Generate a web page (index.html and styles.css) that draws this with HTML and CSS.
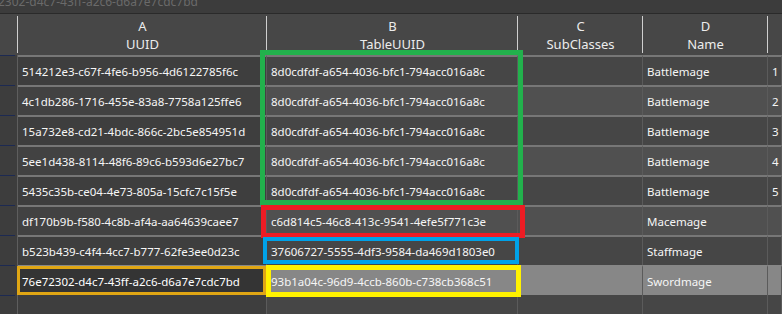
FILE: index.html
```html
<!DOCTYPE html>
<html>
<head>
<meta charset="utf-8">
<link rel="stylesheet" href="styles.css">
</head>
<body>
<div class="topbar"><span class="path">2302-d4c7-43ff-a2c6-d6a7e7cdc7bd</span></div>
<div class="grid">
  <div class="rh head"></div>
  <div class="hc">A<br>UUID</div>
  <div class="hc">B<br>TableUUID</div>
  <div class="hc">C<br>SubClasses</div>
  <div class="hc">D<br>Name</div>
  <div class="hc last"></div>

  <div class="rh"></div>
  <div class="c a">514212e3-c67f-4fe6-b956-4d6122785f6c</div>
  <div class="c">8d0cdfdf-a654-4036-bfc1-794acc016a8c</div>
  <div class="c"></div>
  <div class="c">Battlemage</div>
  <div class="c">1</div>

  <div class="rh"></div>
  <div class="c a ev">4c1db286-1716-455e-83a8-7758a125ffe6</div>
  <div class="c ev">8d0cdfdf-a654-4036-bfc1-794acc016a8c</div>
  <div class="c ev"></div>
  <div class="c ev">Battlemage</div>
  <div class="c ev">2</div>

  <div class="rh"></div>
  <div class="c a">15a732e8-cd21-4bdc-866c-2bc5e854951d</div>
  <div class="c">8d0cdfdf-a654-4036-bfc1-794acc016a8c</div>
  <div class="c"></div>
  <div class="c">Battlemage</div>
  <div class="c">3</div>

  <div class="rh"></div>
  <div class="c a ev">5ee1d438-8114-48f6-89c6-b593d6e27bc7</div>
  <div class="c ev">8d0cdfdf-a654-4036-bfc1-794acc016a8c</div>
  <div class="c ev"></div>
  <div class="c ev">Battlemage</div>
  <div class="c ev">4</div>

  <div class="rh"></div>
  <div class="c a">5435c35b-ce04-4e73-805a-15cfc7c15f5e</div>
  <div class="c">8d0cdfdf-a654-4036-bfc1-794acc016a8c</div>
  <div class="c"></div>
  <div class="c">Battlemage</div>
  <div class="c">5</div>

  <div class="rh"></div>
  <div class="c a ev">df170b9b-f580-4c8b-af4a-aa64639caee7</div>
  <div class="c ev">c6d814c5-46c8-413c-9541-4efe5f771c3e</div>
  <div class="c ev"></div>
  <div class="c ev">Macemage</div>
  <div class="c ev"></div>

  <div class="rh"></div>
  <div class="c a">b523b439-c4f4-4cc7-b777-62fe3ee0d23c</div>
  <div class="c">37606727-5555-4df3-9584-da469d1803e0</div>
  <div class="c"></div>
  <div class="c">Staffmage</div>
  <div class="c"></div>

  <div class="rh"></div>
  <div class="c a cur">76e72302-d4c7-43ff-a2c6-d6a7e7cdc7bd</div>
  <div class="c sel">93b1a04c-96d9-4ccb-860b-c738cb368c51</div>
  <div class="c sel"></div>
  <div class="c sel">Swordmage</div>
  <div class="c sel"></div>

  <div class="rh fill"></div>
  <div class="f a"></div>
  <div class="f"></div>
  <div class="f"></div>
  <div class="f"></div>
  <div class="f"></div>

  <div class="box green"></div>
  <div class="box red"></div>
  <div class="box blue"></div>
  <div class="box yellow"></div>
  <div class="box orange"></div>
</div>
</body>
</html>
```

FILE: styles.css
```css
html, body {
  margin: 0;
  padding: 0;
  background: #464646;
  width: 782px;
  height: 314px;
  overflow: hidden;
  font-family: "Noto Sans", "Open Sans", sans-serif;
}

.topbar {
  height: 13px;
  background: #3c3c3c;
  border-bottom: 1px solid #2a2a2a;
  overflow: hidden;
}

.path {
  display: block;
  font-size: 12px;
  line-height: 12px;
  margin-top: -4px;
  margin-left: -2px;
  color: #6a6a6a;
  white-space: nowrap;
}

.grid {
  position: relative;
  display: grid;
  grid-template-columns: 18px 249px 251px 125px 125px 1fr;
  grid-template-rows: 41px repeat(8, 30px) 19px;
  height: 300px;
}

.hc {
  background: #474747 linear-gradient(#cfcfcf, #cfcfcf) no-repeat right 0 top 2px / 1px 37px;
  color: #ececec;
  font-size: 13px;
  line-height: 18px;
  text-align: center;
  padding-top: 3px;
  box-sizing: border-box;
}

.hc.last {
  background: #474747;
}

.rh {
  background: #3d3d3d linear-gradient(#1d2a52, #1d2a52) no-repeat 0 0 / 15px 1px;
  border-right: 1px solid #5e5e5e;
  box-sizing: border-box;
}

.rh.head {
  background: #474747 linear-gradient(#cfcfcf, #cfcfcf) no-repeat right 0 top 2px / 1px 37px;
  border-right: none;
}

.c {
  box-sizing: border-box;
  border-top: 2px solid #777777;
  border-right: 1px solid #5b5b5b;
  background: #464646;
  color: #f6f6f6;
  font-size: 11.5px;
  line-height: 29px;
  padding: 0 0 0 4px;
  white-space: nowrap;
  overflow: hidden;
}

.c.ev {
  background: #505050;
}

.c.a {
  background: #3e3e3e;
}

.c.a.ev {
  background: #424242;
}

.c.cur {
  background: #343434;
  border-top-color: #878787;
  color: #ffffff;
}

.c.sel {
  background: #878787;
  border-top-color: #878787;
  color: #f6f6f6;
}

.f {
  box-sizing: border-box;
  border-right: 1px solid #5b5b5b;
  background: #464646;
}

.f.a {
  background: #3e3e3e;
}

.rh.fill {
  background: #3d3d3d linear-gradient(#1d2a52, #1d2a52) no-repeat 0 0 / 15px 1px;
}

.box {
  position: absolute;
  box-sizing: border-box;
}

.green {
  left: 260px;
  top: 36px;
  width: 263px;
  height: 155px;
  border: 5px solid #22b14c;
}

.red {
  left: 261px;
  top: 191px;
  width: 264px;
  height: 33px;
  border: 5px solid #ed1c24;
}

.blue {
  left: 263px;
  top: 223px;
  width: 256px;
  height: 27px;
  border: 4px solid #00a2e8;
}

.yellow {
  left: 266px;
  top: 251px;
  width: 255px;
  height: 32px;
  border: 5px solid #fff200;
}

.orange {
  left: 17px;
  top: 252px;
  width: 249px;
  height: 29px;
  border: 3px solid #e0a614;
}
```
